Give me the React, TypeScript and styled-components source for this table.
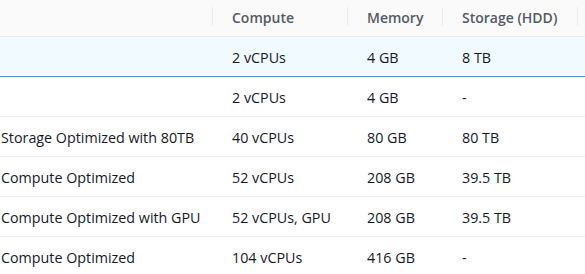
import React from 'react'
import styled, { createGlobalStyle } from 'styled-components'

const GlobalStyle = createGlobalStyle`
  html, body {
    margin: 0;
    padding: 0;
    background: #ffffff;
  }
  body {
    font-family: 'Open Sans', 'Noto Sans', sans-serif;
    -webkit-font-smoothing: antialiased;
  }
`

const Table = styled.table`
  border-collapse: separate;
  border-spacing: 0;
  table-layout: fixed;
  width: 600px;
  font-size: 14.3px;
  color: #16191f;
`

const HeadCell = styled.th<{ $width: number; $first?: boolean }>`
  width: ${p => p.$width}px;
  height: 37px;
  padding: 0 0 1px ${p => (p.$first ? 1 : 20)}px;
  box-sizing: border-box;
  text-align: left;
  font-size: 14px;
  font-weight: 600;
  color: #545b64;
  background: #fafafa;
  border-bottom: 1px solid #eaeded;
  position: relative;

  &::before {
    content: '';
    display: ${p => (p.$first ? 'none' : 'block')};
    position: absolute;
    left: 0;
    top: 7px;
    bottom: 10px;
    border-left: 1px solid #eaeded;
  }
`

const Row = styled.tr<{ $selected?: boolean }>`
  background: ${p => (p.$selected ? '#f1faff' : '#ffffff')};

  & > td {
    border-bottom: 1px solid ${p => (p.$selected ? '#4a97c9' : '#eaeded')};
    height: 40px;
    padding-top: 1px;
    box-sizing: border-box;
  }

  &:last-child > td {
    border-bottom: none;
  }
`

const Cell = styled.td<{ $first?: boolean }>`
  padding: 0 0 0 ${p => (p.$first ? 1 : 20)}px;
  white-space: nowrap;
  vertical-align: middle;
`

type Instance = {
  name: string
  compute: string
  memory: string
  storage: string
  selected?: boolean
}

const rows: Instance[] = [
  { name: '', compute: '2 vCPUs', memory: '4 GB', storage: '8 TB', selected: true },
  { name: '', compute: '2 vCPUs', memory: '4 GB', storage: '-' },
  { name: 'Storage Optimized with 80TB', compute: '40 vCPUs', memory: '80 GB', storage: '80 TB' },
  { name: 'Compute Optimized', compute: '52 vCPUs', memory: '208 GB', storage: '39.5 TB' },
  { name: 'Compute Optimized with GPU', compute: '52 vCPUs, GPU', memory: '208 GB', storage: '39.5 TB' },
  { name: 'Compute Optimized', compute: '104 vCPUs', memory: '416 GB', storage: '-' },
]

const App: React.FC = () => {
  return (
    <>
      <GlobalStyle />
      <Table>
        <thead>
          <tr>
            <HeadCell $width={212} $first></HeadCell>
            <HeadCell $width={135}>Compute</HeadCell>
            <HeadCell $width={95}>Memory</HeadCell>
            <HeadCell $width={135}>Storage (HDD)</HeadCell>
            <HeadCell $width={23}></HeadCell>
          </tr>
        </thead>
        <tbody>
          {rows.map((r, i) => (
            <Row key={i} $selected={r.selected}>
              <Cell $first>{r.name}</Cell>
              <Cell>{r.compute}</Cell>
              <Cell>{r.memory}</Cell>
              <Cell>{r.storage}</Cell>
              <Cell></Cell>
            </Row>
          ))}
        </tbody>
      </Table>
    </>
  )
}

export default App
